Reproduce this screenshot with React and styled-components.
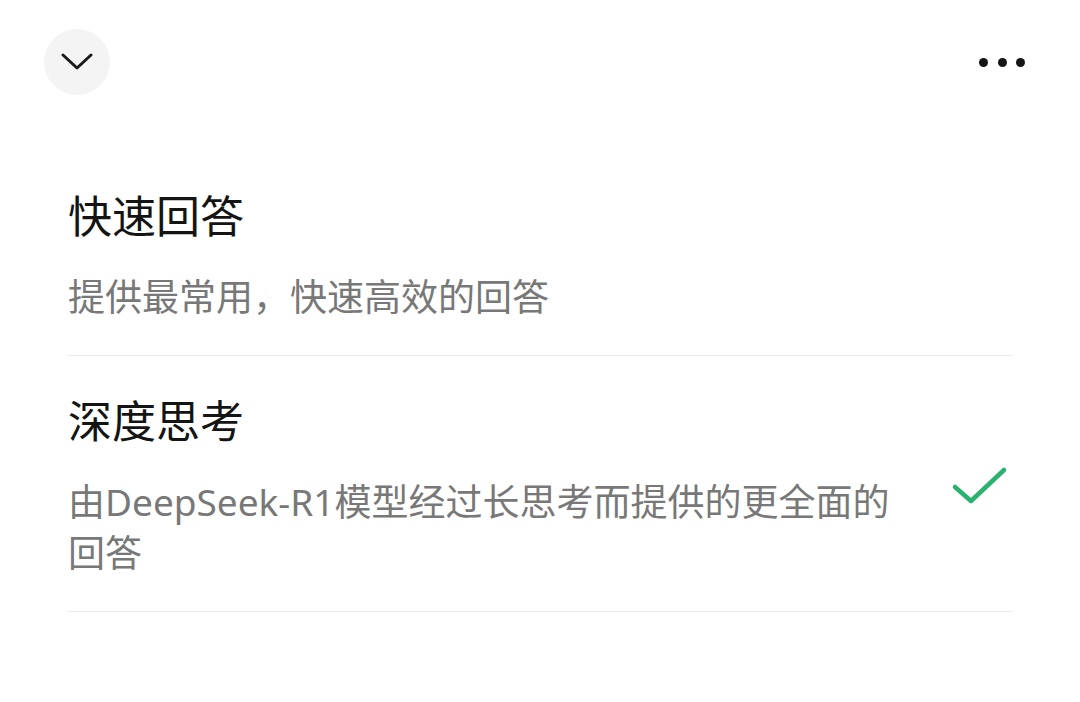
import React from "react"
import styled, { createGlobalStyle } from "styled-components"

const GlobalStyle = createGlobalStyle`
  html, body {
    margin: 0;
    padding: 0;
    background: #ffffff;
  }
  body {
    font-family: "Noto Sans", "Noto Sans CJK SC", sans-serif;
  }
`

const Sheet = styled.div`
  width: 1080px;
  height: 702px;
  background: #ffffff;
  overflow: hidden;
`

const TopBar = styled.div`
  display: flex;
  align-items: center;
  justify-content: space-between;
  padding: 29px 55px 0 44px;
`

const CircleButton = styled.button`
  width: 66px;
  height: 66px;
  border-radius: 50%;
  border: none;
  background: #f4f4f4;
  display: flex;
  align-items: center;
  justify-content: center;
  padding: 0;
`

const MoreButton = styled.button`
  display: flex;
  gap: 9.5px;
  border: none;
  background: none;
  padding: 0;
`

const Dot = styled.span`
  width: 9px;
  height: 9px;
  border-radius: 50%;
  background: #151515;
`

const OptionList = styled.div`
  margin-top: 56px;
  padding: 0 67px 0 68px;
`

const Option = styled.div`
  display: flex;
  flex-direction: column;
  gap: 25px;
  padding: 35px 0 33px;
  border-bottom: 1px solid #ececec;
`

const Title = styled.div`
  font-size: 44px;
  line-height: 60px;
  color: #141414;
`

const DescRow = styled.div`
  display: flex;
  align-items: flex-start;
  justify-content: space-between;
`

const Desc = styled.div`
  width: 850px;
  font-size: 37px;
  line-height: 51px;
  color: #787878;
`

const Check = styled.svg`
  margin-top: -11px;
  margin-right: 4px;
  flex-shrink: 0;
`

const options = [
  { title: "快速回答", desc: "提供最常用，快速高效的回答", selected: false },
  {
    title: "深度思考",
    desc: "由DeepSeek-R1模型经过长思考而提供的更全面的回答",
    selected: true,
  },
]

const App = () => {
  return (
    <Sheet>
      <GlobalStyle />
      <TopBar>
        <CircleButton>
          <svg width="32" height="20" viewBox="0 0 32 20">
            <path
              d="M2 3 L16 16 L30 3"
              fill="none"
              stroke="#1a1a1a"
              strokeWidth="3"
              strokeLinecap="round"
              strokeLinejoin="round"
            />
          </svg>
        </CircleButton>
        <MoreButton>
          <Dot />
          <Dot />
          <Dot />
        </MoreButton>
      </TopBar>
      <OptionList>
        {options.map((o) => (
          <Option key={o.title}>
            <Title>{o.title}</Title>
            <DescRow>
              <Desc>{o.desc}</Desc>
              {o.selected && (
                <Check width="58" height="44" viewBox="0 0 58 44">
                  <path
                    d="M4 22 L20 36 L53 5"
                    fill="none"
                    stroke="#2ab26f"
                    strokeWidth="4.5"
                    strokeLinecap="round"
                    strokeLinejoin="round"
                  />
                </Check>
              )}
            </DescRow>
          </Option>
        ))}
      </OptionList>
    </Sheet>
  )
}

export default App
